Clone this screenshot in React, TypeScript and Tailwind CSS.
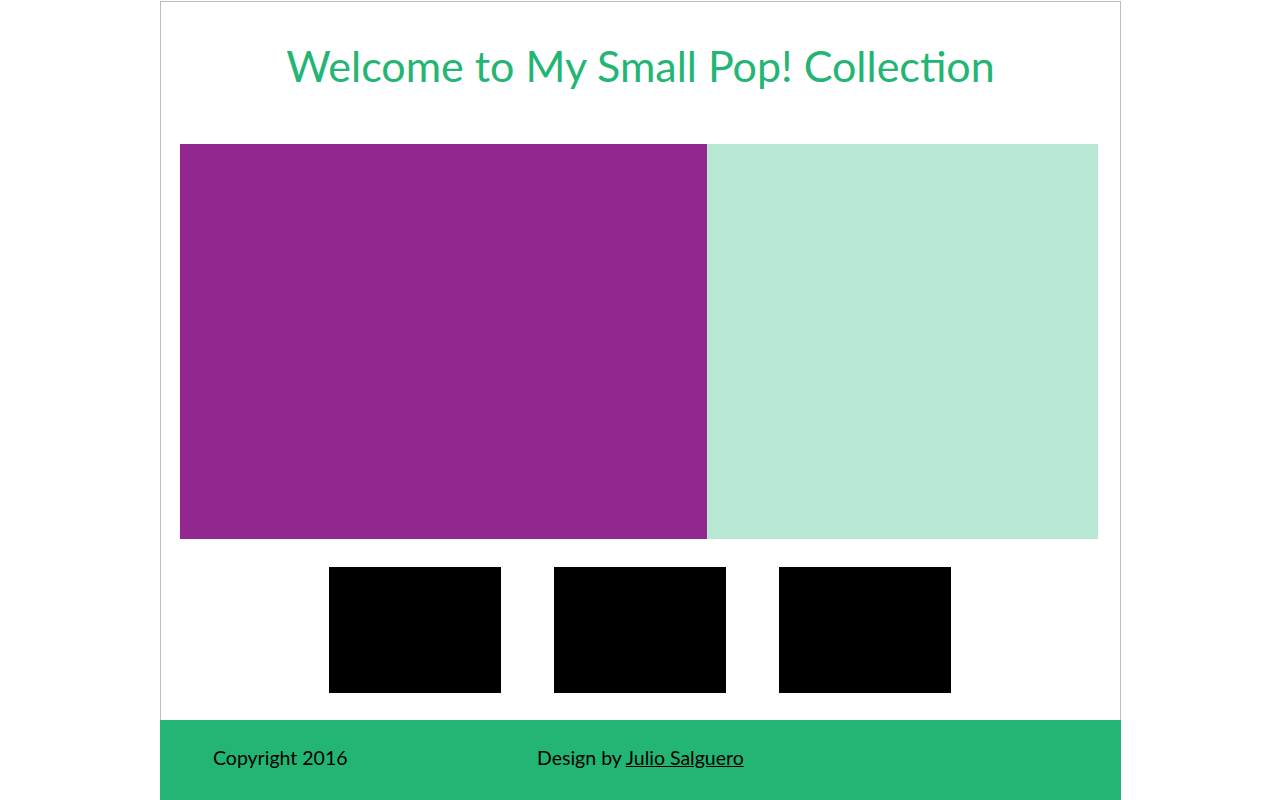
export default function App() {
  return (
    <div className="w-full bg-white pt-px">
      <div className="ml-[160px] w-[961px] border border-[#bdbdbd] border-b-0 font-['Lato',sans-serif]">
        <header className="h-[142px] flex justify-center pt-[36px]">
          <h1 className="text-[43px] leading-[56px] text-[#23b573]">
            Welcome to My Small Pop! Collection
          </h1>
        </header>
        <section className="flex px-[19px]">
          <div className="w-[527px] h-[395px] bg-[#92278f]" />
          <div className="w-[391px] h-[395px] bg-[#b8e8d4]" />
        </section>
        <section className="flex justify-center gap-[53px] pt-[28px] pb-[27px] pr-px">
          <div className="w-[172px] h-[126px] bg-black" />
          <div className="w-[172px] h-[126px] bg-black" />
          <div className="w-[172px] h-[126px] bg-black" />
        </section>
      </div>
      <footer className="ml-[160px] w-[961px] h-[80px] bg-[#23b573] flex items-center pl-[53px] pb-[4px] text-[19.5px] text-black font-['Lato',sans-serif]">
        <span className="w-[324px]">Copyright 2016</span>
        <span>
          Design by <a href="#" className="underline">Julio Salguero</a>
        </span>
      </footer>
    </div>
  );
}
